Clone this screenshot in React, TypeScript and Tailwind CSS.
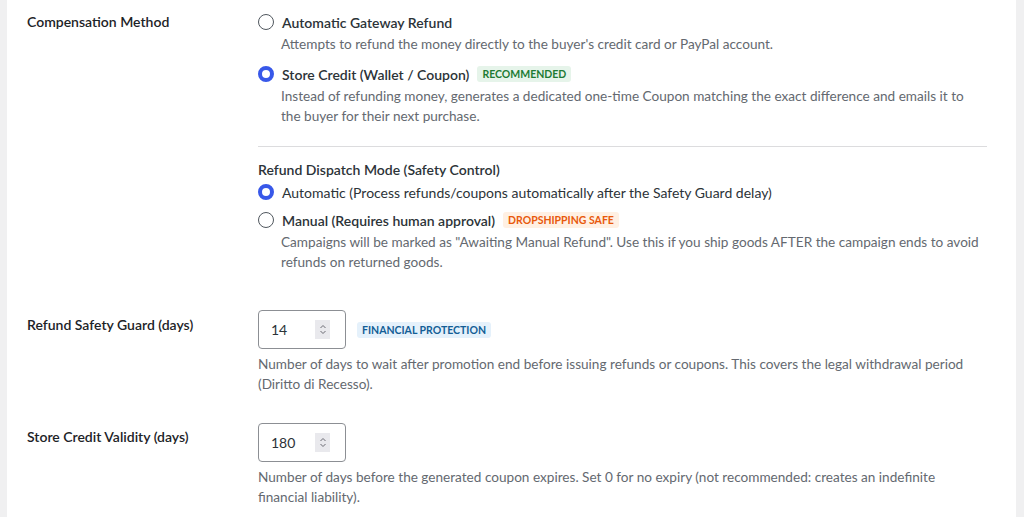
const font = { fontFamily: 'Lato, "Liberation Sans", sans-serif' };

function Radio({ checked }: { checked?: boolean }) {
  return checked ? (
    <span className="w-4 h-4 rounded-full border-[4px] border-[#3858e9] bg-white flex-shrink-0" />
  ) : (
    <span className="w-4 h-4 rounded-full border border-[#50575e] bg-white flex-shrink-0" />
  );
}

function Badge({ tone, children }: { tone: 'green' | 'orange' | 'blue'; children: string }) {
  const cls =
    tone === 'green'
      ? 'bg-[#e6f4ea] text-[#1e7b34]'
      : tone === 'orange'
        ? 'bg-[#fff0e3] text-[#e8590c]'
        : 'bg-[#e5f1fb] text-[#135e96]';
  return (
    <span className={`${cls} text-[10.5px] font-bold uppercase px-[5px] h-[16px] leading-[16px] rounded-[3px]`}>
      {children}
    </span>
  );
}

function Option({ checked, label, badge, desc }: {
  checked?: boolean;
  label: string;
  badge?: React.ReactNode;
  desc?: React.ReactNode;
}) {
  return (
    <div>
      <div className="flex items-center gap-2 h-5">
        <Radio checked={checked} />
        <span className="text-[14px] font-semibold text-[#2c3338]">{label}</span>
        {badge}
      </div>
      {desc && <p className="ml-[23px] mr-[6px] mt-[2px] text-[13.6px] leading-5 text-[#646970]">{desc}</p>}
    </div>
  );
}

function NumberBox({ value }: { value: string }) {
  return (
    <div className="w-[88px] h-[39px] border border-[#8c8f94] rounded-[4px] bg-white flex items-center pl-[12px] pr-[15px] justify-between">
      <span className="text-[14px] text-[#2c3338]">{value}</span>
      <span className="w-[15px] h-[19px] bg-[#e9e9ed] flex items-center justify-center">
        <svg width="8" height="13" viewBox="0 0 8 13" fill="none" stroke="#6b6b73" strokeWidth="1">
          <path d="M1.5 5 4 2.5 6.5 5" />
          <path d="M1.5 8 4 10.5 6.5 8" />
        </svg>
      </span>
    </div>
  );
}

export default function App() {
  return (
    <div className="w-[1024px] h-[517px] bg-[#f0f0f1] flex overflow-hidden" style={font}>
      <div className="ml-[7px] w-[1009px] bg-white">
        {/* Compensation Method */}
        <div className="flex pt-3">
          <div className="w-[251px] pl-[20px] text-[14px] leading-5 font-semibold text-[#1d2327]">Compensation Method</div>
          <div className="w-[729px]">
            <Option
              label="Automatic Gateway Refund"
              desc="Attempts to refund the money directly to the buyer's credit card or PayPal account."
            />
            <div className="mt-[10px]">
              <Option
                checked
                label="Store Credit (Wallet / Coupon)"
                badge={<Badge tone="green">Recommended</Badge>}
                desc="Instead of refunding money, generates a dedicated one-time Coupon matching the exact difference and emails it to the buyer for their next purchase."
              />
            </div>
            <div className="mt-5 border-t border-[#dcdcde]" />
            <div className="mt-[13px] text-[14px] leading-5 font-semibold text-[#2c3338]">Refund Dispatch Mode (Safety Control)</div>
            <div className="mt-[2px] flex items-center gap-2 h-5">
              <Radio checked />
              <span className="text-[14px] text-[#2c3338]">Automatic (Process refunds/coupons automatically after the Safety Guard delay)</span>
            </div>
            <div className="mt-2">
              <Option
                label="Manual (Requires human approval)"
                badge={<Badge tone="orange">Dropshipping Safe</Badge>}
                desc='Campaigns will be marked as "Awaiting Manual Refund". Use this if you ship goods AFTER the campaign ends to avoid refunds on returned goods.'
              />
            </div>
          </div>
        </div>

        {/* Refund Safety Guard */}
        <div className="flex mt-[38px]">
          <div className="w-[251px] pl-[20px] pt-[5px] text-[14px] leading-5 font-semibold text-[#1d2327]">Refund Safety Guard (days)</div>
          <div className="w-[729px]">
            <div className="flex items-center gap-[11px]">
              <NumberBox value="14" />
              <Badge tone="blue">Financial Protection</Badge>
            </div>
            <p className="mt-[5px] text-[13.6px] leading-5 text-[#646970]">
              Number of days to wait after promotion end before issuing refunds or coupons. This covers the legal withdrawal period (Diritto di Recesso).
            </p>
          </div>
        </div>

        {/* Store Credit Validity */}
        <div className="flex mt-[29px]">
          <div className="w-[251px] pl-[20px] pt-[4px] text-[14px] leading-5 font-semibold text-[#1d2327]">Store Credit Validity (days)</div>
          <div className="w-[729px]">
            <NumberBox value="180" />
            <p className="mt-[5px] text-[13.6px] leading-5 text-[#646970]">
              Number of days before the generated coupon expires. Set 0 for no expiry (not recommended: creates an indefinite financial liability).
            </p>
          </div>
        </div>
      </div>
    </div>
  );
}
